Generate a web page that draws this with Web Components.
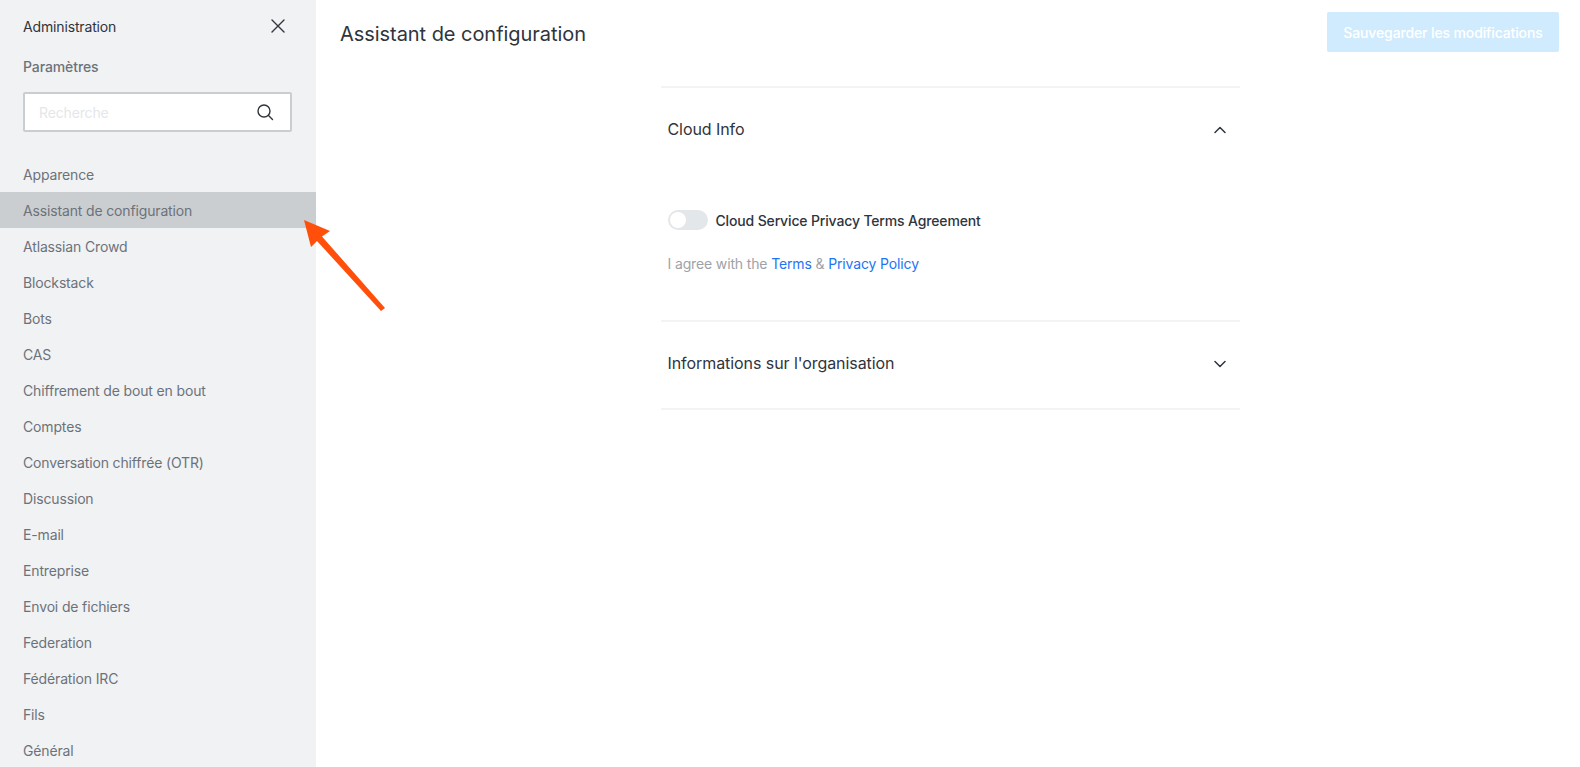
<!DOCTYPE html>
<html lang="fr">
<head>
<meta charset="utf-8">
<title>Assistant de configuration</title>
<style>
  html, body { margin: 0; height: 100%; overflow: hidden; background: #fff; }
  body { font-family: Inter, "Noto Sans", sans-serif; }
</style>
</head>
<body>
<admin-app>
  <admin-sidebar slot="sidebar">
    <nav-item>Apparence</nav-item>
    <nav-item selected>Assistant de configuration</nav-item>
    <nav-item>Atlassian Crowd</nav-item>
    <nav-item>Blockstack</nav-item>
    <nav-item>Bots</nav-item>
    <nav-item>CAS</nav-item>
    <nav-item>Chiffrement de bout en bout</nav-item>
    <nav-item>Comptes</nav-item>
    <nav-item>Conversation chiffrée (OTR)</nav-item>
    <nav-item>Discussion</nav-item>
    <nav-item>E-mail</nav-item>
    <nav-item>Entreprise</nav-item>
    <nav-item>Envoi de fichiers</nav-item>
    <nav-item>Federation</nav-item>
    <nav-item>Fédération IRC</nav-item>
    <nav-item>Fils</nav-item>
    <nav-item>Général</nav-item>
  </admin-sidebar>
  <settings-page slot="main">
    <settings-section title="Cloud Info" open>
      <toggle-row>Cloud Service Privacy Terms Agreement</toggle-row>
      <help-text>I agree with the <a href="#">Terms</a> &amp; <a href="#">Privacy Policy</a></help-text>
    </settings-section>
    <settings-section title="Informations sur l'organisation"></settings-section>
  </settings-page>
  <call-arrow slot="overlay"></call-arrow>
</admin-app>

<script>
class AdminApp extends HTMLElement {
  constructor() {
    super();
    this.attachShadow({mode: 'open'}).innerHTML = `
      <style>
        :host { display: flex; height: 100vh; position: relative; overflow: hidden; }
      </style>
      <slot name="sidebar"></slot>
      <slot name="main"></slot>
      <slot name="overlay"></slot>
    `;
  }
}

class AdminSidebar extends HTMLElement {
  constructor() {
    super();
    this.attachShadow({mode: 'open'}).innerHTML = `
      <style>
        :host { display: block; flex: none; width: 316px; height: 100%; overflow: hidden; background: #f1f2f4; }
        .head {
          display: flex; justify-content: space-between; align-items: center;
          height: 20px; padding: 17px 30px 0 23px;
          font-size: 14px; line-height: 20px; letter-spacing: -0.15px; color: #2f343d;
        }
        .head svg { display: block; margin-top: -2px; }
        .sub { margin-top: 20px; padding: 0 23px; font-size: 14px; font-weight: 500; line-height: 20px; letter-spacing: -0.1px; color: #6c727a; }
        .search {
          display: flex; align-items: center; justify-content: space-between; box-sizing: border-box;
          width: 269px; height: 40px; margin: 15px 0 24px 23px; padding: 0 16px 0 14px;
          background: #fff; border: 2px solid #cbced1; border-radius: 2px;
          font-size: 14px; letter-spacing: -0.15px; color: #e4e7ea;
        }
      </style>
      <div class="head">
        <span>Administration</span>
        <svg width="16" height="16" viewBox="0 0 16 16" fill="none" stroke="#2f343d" stroke-width="1.4" stroke-linecap="round"><path d="M2 2l12 12M14 2L2 14"/></svg>
      </div>
      <div class="sub">Paramètres</div>
      <div class="search">
        <span>Recherche</span>
        <svg width="18" height="18" viewBox="0 0 18 18" fill="none" stroke="#2f343d" stroke-width="1.4" stroke-linecap="round"><circle cx="8" cy="8" r="6"/><path d="M12.5 12.5L16.5 16.5"/></svg>
      </div>
      <slot></slot>
    `;
  }
}

class NavItem extends HTMLElement {
  constructor() {
    super();
    this.attachShadow({mode: 'open'}).innerHTML = `
      <style>
        :host { display: block; height: 36px; padding: 0 23px; font-size: 14px; line-height: 38px; letter-spacing: -0.15px; color: #6c727a; white-space: nowrap; }
        :host([selected]) { background: #cbced1; }
      </style>
      <slot></slot>
    `;
  }
}

class SettingsPage extends HTMLElement {
  constructor() {
    super();
    this.attachShadow({mode: 'open'}).innerHTML = `
      <style>
        :host { display: block; flex: 1; min-width: 0; }
        header {
          display: flex; justify-content: space-between; align-items: flex-start;
          height: 86px; padding: 12px 21px 0 24px; box-sizing: border-box;
        }
        h1 { margin: 8px 0 0; font-size: 20px; font-weight: 400; line-height: 28px; letter-spacing: -0.05px; color: #2f343d; }
        button {
          width: 232px; height: 40px; padding: 0; border: 0; border-radius: 2px;
          background: #d1ebfe; color: #fff; font: 500 14px Inter, sans-serif; letter-spacing: -0.13px;
        }
        .content { width: 579px; margin-left: 344.5px; border-top: 2px solid #f2f3f5; }
      </style>
      <header>
        <h1>Assistant de configuration</h1>
        <button type="button">Sauvegarder les modifications</button>
      </header>
      <div class="content"><slot></slot></div>
    `;
  }
}

class SettingsSection extends HTMLElement {
  constructor() {
    super();
    const open = this.hasAttribute('open');
    this.attachShadow({mode: 'open'}).innerHTML = `
      <style>
        :host { display: block; border-bottom: 2px solid #f2f3f5; }
        .title {
          display: flex; justify-content: space-between; align-items: center;
          height: 82px; padding: 0 14px 4px 7px;
          font-size: 16px; font-weight: 400; letter-spacing: -0.07px; color: #2f343d;
        }
        .title svg { margin-top: 2px; }
        .body { padding: 36px 7px 46px; }
        .body[hidden] { display: none; }
      </style>
      <div class="title">
        <span>${this.getAttribute('title')}</span>
        <svg width="12" height="8" viewBox="0 0 12 8" fill="none" stroke="#2f343d" stroke-width="1.5" stroke-linecap="round" stroke-linejoin="round">
          <path d="${open ? 'M1 6.5l5-5 5 5' : 'M1 1.5l5 5 5-5'}"/>
        </svg>
      </div>
      <div class="body" ${open ? '' : 'hidden'}><slot></slot></div>
    `;
    this.removeAttribute('title');
  }
}

class ToggleRow extends HTMLElement {
  constructor() {
    super();
    this.attachShadow({mode: 'open'}).innerHTML = `
      <style>
        :host { display: flex; align-items: center; gap: 8px; height: 20px; font-size: 14px; font-weight: 500; letter-spacing: -0.15px; color: #2f343d; }
        .track { display: block; box-sizing: border-box; width: 40px; height: 20px; padding: 2px; border-radius: 10px; background: #e4e7ea; }
        .knob { display: block; width: 16px; height: 16px; border-radius: 50%; background: #fff; }
      </style>
      <span class="track"><span class="knob"></span></span>
      <span><slot></slot></span>
    `;
  }
}

class HelpText extends HTMLElement {
  constructor() {
    super();
    this.attachShadow({mode: 'open'}).innerHTML = `
      <style>
        :host { display: block; margin-top: 24px; font-size: 14px; line-height: 20px; letter-spacing: -0.14px; color: #9ea2a8; }
        ::slotted(a) { color: #1d74f5; text-decoration: none; }
      </style>
      <slot></slot>
    `;
  }
}

class CallArrow extends HTMLElement {
  constructor() {
    super();
    this.attachShadow({mode: 'open'}).innerHTML = `
      <style>
        :host { position: absolute; left: 300px; top: 215px; width: 90px; height: 100px; }
        svg { display: block; }
      </style>
      <svg width="90" height="100" viewBox="0 0 90 100">
        <path d="M4 5L30 16L22 21.500L85 93L81 96L17 26L11 32Z" fill="#ff4f0a"/>
      </svg>
    `;
  }
}

customElements.define('admin-app', AdminApp);
customElements.define('admin-sidebar', AdminSidebar);
customElements.define('nav-item', NavItem);
customElements.define('settings-page', SettingsPage);
customElements.define('settings-section', SettingsSection);
customElements.define('toggle-row', ToggleRow);
customElements.define('help-text', HelpText);
customElements.define('call-arrow', CallArrow);
</script>
</body>
</html>
